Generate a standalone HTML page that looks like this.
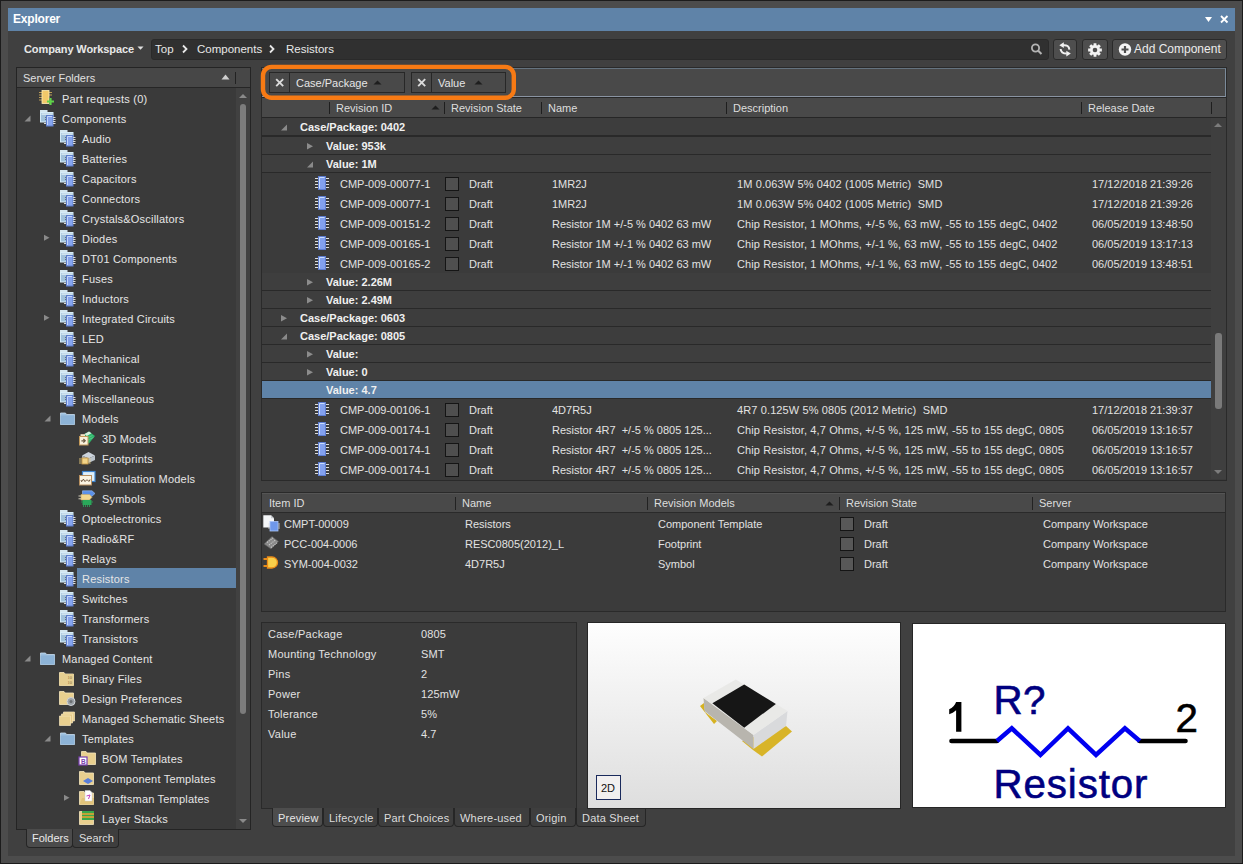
<!DOCTYPE html><html><head><meta charset="utf-8"><style>
*{box-sizing:border-box}
html,body{margin:0;padding:0}
body{width:1243px;height:864px;overflow:hidden;background:#1c1c1c;font-family:"Liberation Sans", sans-serif;font-size:11px;color:#e2e2e2;position:relative}
.a{position:absolute}
.t{position:absolute;white-space:nowrap;line-height:20px;height:20px}
.b{font-weight:bold}
svg{position:absolute;overflow:visible}
</style></head><body>
<div class="a" style="left:1px;top:1px;width:1241px;height:862px;background:#4c4c4c"></div>
<div class="a" style="left:8px;top:8px;width:1227px;height:848px;background:#404040"></div>
<div class="a" style="left:8px;top:8px;width:1227px;height:23px;background:#5f83a8"></div>
<div class="t" style="left:13px;top:9px;height:20px;line-height:20px;font-weight:bold;font-size:12px;color:#fff;letter-spacing:-0.2px">Explorer</div>
<svg style="left:1204px;top:15px" width="10" height="8" viewBox="0 0 10 8"><path d="M1 2 L8 2 L4.5 7 Z" fill="#fff"/></svg>
<svg style="left:1220px;top:15px" width="9" height="9" viewBox="0 0 9 9"><path d="M1 1 L7.5 7.5 M7.5 1 L1 7.5" stroke="#fff" stroke-width="1.8"/></svg>
<div class="t" style="left:24px;top:39px;height:20px;line-height:20px;font-weight:bold;color:#e8e8e8;letter-spacing:-0.1px">Company Workspace</div>
<svg style="left:137px;top:46px" width="8" height="5" viewBox="0 0 8 5"><path d="M0.5 0.5 L6.5 0.5 L3.5 3.8 Z" fill="#e0e0e0"/></svg>
<div class="a" style="left:151px;top:39px;width:898px;height:21px;background:#303030;border-radius:3px;border:1px solid #2a2a2a"></div>
<div class="t" style="left:155px;top:39px;height:20px;line-height:20px;color:#e8e8e8;font-size:11.5px">Top</div>
<svg style="left:181px;top:44px" width="8" height="10" viewBox="0 0 8 10"><path d="M2 1.5 L5.5 5 L2 8.5" stroke="#e8e8e8" stroke-width="1.8" fill="none"/></svg>
<div class="t" style="left:197px;top:39px;height:20px;line-height:20px;color:#e8e8e8;font-size:11.5px">Components</div>
<svg style="left:268px;top:44px" width="8" height="10" viewBox="0 0 8 10"><path d="M2 1.5 L5.5 5 L2 8.5" stroke="#e8e8e8" stroke-width="1.8" fill="none"/></svg>
<div class="t" style="left:286px;top:39px;height:20px;line-height:20px;color:#e8e8e8;font-size:11.5px">Resistors</div>
<svg style="left:1030px;top:42px" width="14" height="14" viewBox="0 0 14 14"><circle cx="5.5" cy="6" r="3.6" stroke="#b4b4b4" stroke-width="1.8" fill="none"/><path d="M8.2 8.7 L11.5 12" stroke="#b4b4b4" stroke-width="2"/></svg>
<div class="a" style="left:1053px;top:39px;width:24px;height:21px;background:#4e4e4e;border:1px solid #2a2a2a;border-radius:3px"></div>
<svg style="left:1057px;top:41px" width="16" height="16" viewBox="0 0 16 16"><path d="M2.3 4.2 L6.8 1.3 L6.8 7 Z" fill="#f0f0f0"/><path d="M6 4.2 Q12 3.6 12.4 8.6" stroke="#f0f0f0" stroke-width="2" fill="none"/><path d="M3.6 8 Q4 12.6 9.8 12.6" stroke="#f0f0f0" stroke-width="2" fill="none"/><path d="M13.8 12.6 L9.3 9.7 L9.3 15.4 Z" fill="#f0f0f0"/></svg>
<div class="a" style="left:1082px;top:39px;width:26px;height:21px;background:#4e4e4e;border:1px solid #2a2a2a;border-radius:3px"></div>
<svg style="left:1087px;top:42px" width="16" height="16" viewBox="0 0 16 16"><path d="M12.78 6.52 L14.86 6.61 L14.86 9.39 L12.78 9.48 L12.42 10.33 L13.83 11.87 L11.87 13.83 L10.33 12.42 L9.48 12.78 L9.39 14.86 L6.61 14.86 L6.52 12.78 L5.67 12.42 L4.13 13.83 L2.17 11.87 L3.58 10.33 L3.22 9.48 L1.14 9.39 L1.14 6.61 L3.22 6.52 L3.58 5.67 L2.17 4.13 L4.13 2.17 L5.67 3.58 L6.52 3.22 L6.61 1.14 L9.39 1.14 L9.48 3.22 L10.33 3.58 L11.87 2.17 L13.83 4.13 L12.42 5.67 Z" fill="#f2f2f2"/><circle cx="8" cy="8" r="2.3" fill="#4e4e4e"/></svg>
<div class="a" style="left:1112px;top:39px;width:115px;height:21px;background:#4e4e4e;border:1px solid #2a2a2a;border-radius:3px"></div>
<svg style="left:1118px;top:43px" width="14" height="14" viewBox="0 0 14 14"><circle cx="7" cy="6.5" r="6.2" fill="#f4f4f4"/><path d="M7 3 V10 M3.5 6.5 H10.5" stroke="#4e4e4e" stroke-width="2.2"/></svg>
<div class="t" style="left:1134px;top:39px;height:20px;line-height:20px;color:#ececec;font-size:12px">Add Component</div>
<div class="a" style="left:16px;top:67px;width:235px;height:763px;background:#3a3a3a;border:1px solid #242424"></div>
<div class="a" style="left:17px;top:68px;width:233px;height:20px;background:#474747;border-bottom:1px solid #262626"></div>
<div class="t" style="left:23px;top:68px;height:20px;line-height:20px;color:#e0e0e0">Server Folders</div>
<svg style="left:221px;top:74px" width="10" height="6" viewBox="0 0 10 6"><path d="M0.5 5.5 L4.5 0.5 L8.5 5.5 Z" fill="#cfcfcf"/></svg>
<div class="a" style="left:235px;top:72px;width:1px;height:12px;background:#222"></div>
<div class="a" style="left:236px;top:88px;width:14px;height:741px;background:#414141"></div>
<svg style="left:238px;top:93px" width="10" height="6" viewBox="0 0 10 6"><path d="M1 5 L5 1 L9 5 Z" fill="#8a8a8a"/></svg>
<div class="a" style="left:240px;top:104px;width:6px;height:610px;background:#7c7c7c;border-radius:3px"></div>
<svg style="left:238px;top:818px" width="10" height="6" viewBox="0 0 10 6"><path d="M1 1 L5 5 L9 1 Z" fill="#8a8a8a"/></svg>
<svg style="left:39px;top:90px" width="16" height="16" viewBox="0 0 16 16"><path d="M0 2.5 H3 M0 5 H3 M0 7.5 H3 M0 10 H3 M10 2.5 H13 M10 5 H13" stroke="#c9a85a" stroke-width="0.9"/><rect x="3" y="0.5" width="7" height="13" fill="#f2c96a" stroke="#fff1b8" stroke-width="0.8"/><path d="M11.5 8 V15 M8 11.5 H15" stroke="#5fd34a" stroke-width="2.2"/></svg>
<div class="t" style="left:62px;top:89px;height:20px;line-height:20px;color:#e6e6e6;letter-spacing:0.2px">Part requests (0)</div>
<svg style="left:24px;top:115px" width="8" height="8" viewBox="0 0 8 8"><path d="M0.5 6.5 L6.5 6.5 L6.5 0.5 Z" fill="#8a8a8a"/></svg>
<svg style="left:40px;top:110px" width="18" height="18" viewBox="0 0 18 18"><rect x="0" y="0" width="7.5" height="2.5" fill="#d4e6ee"/><rect x="0.5" y="2.5" width="12.5" height="9.5" fill="#a2c2da" stroke="#d6ecf8" stroke-width="1"/><rect x="1.5" y="3.5" width="10.5" height="1.2" fill="#e6f2f8"/><path d="M5 7.5 H7 M5 9.5 H7" stroke="#5a6a78" stroke-width="0.9"/><rect x="6.5" y="5.5" width="6.5" height="10.5" fill="#87a5ee" stroke="#5f7fcc" stroke-width="1"/><path d="M7.5 6.5 V15 M7.5 6.5 H12" stroke="#c4d6fc" stroke-width="1"/><path d="M13 7.5 H15.5 M13 9.5 H15.5 M13 11.5 H15.5 M13 13.5 H15.5 M4 13.5 H6" stroke="#d8d8d8" stroke-width="1"/></svg>
<div class="t" style="left:62px;top:109px;height:20px;line-height:20px;color:#e6e6e6;letter-spacing:0.2px">Components</div>
<svg style="left:60px;top:130px" width="18" height="18" viewBox="0 0 18 18"><rect x="0" y="0" width="7.5" height="2.5" fill="#d4e6ee"/><rect x="0.5" y="2.5" width="12.5" height="9.5" fill="#a2c2da" stroke="#d6ecf8" stroke-width="1"/><rect x="1.5" y="3.5" width="10.5" height="1.2" fill="#e6f2f8"/><path d="M5 7.5 H7 M5 9.5 H7" stroke="#5a6a78" stroke-width="0.9"/><rect x="6.5" y="5.5" width="6.5" height="10.5" fill="#87a5ee" stroke="#5f7fcc" stroke-width="1"/><path d="M7.5 6.5 V15 M7.5 6.5 H12" stroke="#c4d6fc" stroke-width="1"/><path d="M13 7.5 H15.5 M13 9.5 H15.5 M13 11.5 H15.5 M13 13.5 H15.5 M4 13.5 H6" stroke="#d8d8d8" stroke-width="1"/></svg>
<div class="t" style="left:82px;top:129px;height:20px;line-height:20px;color:#e6e6e6;letter-spacing:0.2px">Audio</div>
<svg style="left:60px;top:150px" width="18" height="18" viewBox="0 0 18 18"><rect x="0" y="0" width="7.5" height="2.5" fill="#d4e6ee"/><rect x="0.5" y="2.5" width="12.5" height="9.5" fill="#a2c2da" stroke="#d6ecf8" stroke-width="1"/><rect x="1.5" y="3.5" width="10.5" height="1.2" fill="#e6f2f8"/><path d="M5 7.5 H7 M5 9.5 H7" stroke="#5a6a78" stroke-width="0.9"/><rect x="6.5" y="5.5" width="6.5" height="10.5" fill="#87a5ee" stroke="#5f7fcc" stroke-width="1"/><path d="M7.5 6.5 V15 M7.5 6.5 H12" stroke="#c4d6fc" stroke-width="1"/><path d="M13 7.5 H15.5 M13 9.5 H15.5 M13 11.5 H15.5 M13 13.5 H15.5 M4 13.5 H6" stroke="#d8d8d8" stroke-width="1"/></svg>
<div class="t" style="left:82px;top:149px;height:20px;line-height:20px;color:#e6e6e6;letter-spacing:0.2px">Batteries</div>
<svg style="left:60px;top:170px" width="18" height="18" viewBox="0 0 18 18"><rect x="0" y="0" width="7.5" height="2.5" fill="#d4e6ee"/><rect x="0.5" y="2.5" width="12.5" height="9.5" fill="#a2c2da" stroke="#d6ecf8" stroke-width="1"/><rect x="1.5" y="3.5" width="10.5" height="1.2" fill="#e6f2f8"/><path d="M5 7.5 H7 M5 9.5 H7" stroke="#5a6a78" stroke-width="0.9"/><rect x="6.5" y="5.5" width="6.5" height="10.5" fill="#87a5ee" stroke="#5f7fcc" stroke-width="1"/><path d="M7.5 6.5 V15 M7.5 6.5 H12" stroke="#c4d6fc" stroke-width="1"/><path d="M13 7.5 H15.5 M13 9.5 H15.5 M13 11.5 H15.5 M13 13.5 H15.5 M4 13.5 H6" stroke="#d8d8d8" stroke-width="1"/></svg>
<div class="t" style="left:82px;top:169px;height:20px;line-height:20px;color:#e6e6e6;letter-spacing:0.2px">Capacitors</div>
<svg style="left:60px;top:190px" width="18" height="18" viewBox="0 0 18 18"><rect x="0" y="0" width="7.5" height="2.5" fill="#d4e6ee"/><rect x="0.5" y="2.5" width="12.5" height="9.5" fill="#a2c2da" stroke="#d6ecf8" stroke-width="1"/><rect x="1.5" y="3.5" width="10.5" height="1.2" fill="#e6f2f8"/><path d="M5 7.5 H7 M5 9.5 H7" stroke="#5a6a78" stroke-width="0.9"/><rect x="6.5" y="5.5" width="6.5" height="10.5" fill="#87a5ee" stroke="#5f7fcc" stroke-width="1"/><path d="M7.5 6.5 V15 M7.5 6.5 H12" stroke="#c4d6fc" stroke-width="1"/><path d="M13 7.5 H15.5 M13 9.5 H15.5 M13 11.5 H15.5 M13 13.5 H15.5 M4 13.5 H6" stroke="#d8d8d8" stroke-width="1"/></svg>
<div class="t" style="left:82px;top:189px;height:20px;line-height:20px;color:#e6e6e6;letter-spacing:0.2px">Connectors</div>
<svg style="left:60px;top:210px" width="18" height="18" viewBox="0 0 18 18"><rect x="0" y="0" width="7.5" height="2.5" fill="#d4e6ee"/><rect x="0.5" y="2.5" width="12.5" height="9.5" fill="#a2c2da" stroke="#d6ecf8" stroke-width="1"/><rect x="1.5" y="3.5" width="10.5" height="1.2" fill="#e6f2f8"/><path d="M5 7.5 H7 M5 9.5 H7" stroke="#5a6a78" stroke-width="0.9"/><rect x="6.5" y="5.5" width="6.5" height="10.5" fill="#87a5ee" stroke="#5f7fcc" stroke-width="1"/><path d="M7.5 6.5 V15 M7.5 6.5 H12" stroke="#c4d6fc" stroke-width="1"/><path d="M13 7.5 H15.5 M13 9.5 H15.5 M13 11.5 H15.5 M13 13.5 H15.5 M4 13.5 H6" stroke="#d8d8d8" stroke-width="1"/></svg>
<div class="t" style="left:82px;top:209px;height:20px;line-height:20px;color:#e6e6e6;letter-spacing:0.2px">Crystals&amp;Oscillators</div>
<svg style="left:43px;top:234px" width="8" height="8" viewBox="0 0 8 8"><path d="M1 0.8 L6.5 3.8 L1 6.8 Z" fill="#8a8a8a"/></svg>
<svg style="left:60px;top:230px" width="18" height="18" viewBox="0 0 18 18"><rect x="0" y="0" width="7.5" height="2.5" fill="#d4e6ee"/><rect x="0.5" y="2.5" width="12.5" height="9.5" fill="#a2c2da" stroke="#d6ecf8" stroke-width="1"/><rect x="1.5" y="3.5" width="10.5" height="1.2" fill="#e6f2f8"/><path d="M5 7.5 H7 M5 9.5 H7" stroke="#5a6a78" stroke-width="0.9"/><rect x="6.5" y="5.5" width="6.5" height="10.5" fill="#87a5ee" stroke="#5f7fcc" stroke-width="1"/><path d="M7.5 6.5 V15 M7.5 6.5 H12" stroke="#c4d6fc" stroke-width="1"/><path d="M13 7.5 H15.5 M13 9.5 H15.5 M13 11.5 H15.5 M13 13.5 H15.5 M4 13.5 H6" stroke="#d8d8d8" stroke-width="1"/></svg>
<div class="t" style="left:82px;top:229px;height:20px;line-height:20px;color:#e6e6e6;letter-spacing:0.2px">Diodes</div>
<svg style="left:60px;top:250px" width="18" height="18" viewBox="0 0 18 18"><rect x="0" y="0" width="7.5" height="2.5" fill="#d4e6ee"/><rect x="0.5" y="2.5" width="12.5" height="9.5" fill="#a2c2da" stroke="#d6ecf8" stroke-width="1"/><rect x="1.5" y="3.5" width="10.5" height="1.2" fill="#e6f2f8"/><path d="M5 7.5 H7 M5 9.5 H7" stroke="#5a6a78" stroke-width="0.9"/><rect x="6.5" y="5.5" width="6.5" height="10.5" fill="#87a5ee" stroke="#5f7fcc" stroke-width="1"/><path d="M7.5 6.5 V15 M7.5 6.5 H12" stroke="#c4d6fc" stroke-width="1"/><path d="M13 7.5 H15.5 M13 9.5 H15.5 M13 11.5 H15.5 M13 13.5 H15.5 M4 13.5 H6" stroke="#d8d8d8" stroke-width="1"/></svg>
<div class="t" style="left:82px;top:249px;height:20px;line-height:20px;color:#e6e6e6;letter-spacing:0.2px">DT01 Components</div>
<svg style="left:60px;top:270px" width="18" height="18" viewBox="0 0 18 18"><rect x="0" y="0" width="7.5" height="2.5" fill="#d4e6ee"/><rect x="0.5" y="2.5" width="12.5" height="9.5" fill="#a2c2da" stroke="#d6ecf8" stroke-width="1"/><rect x="1.5" y="3.5" width="10.5" height="1.2" fill="#e6f2f8"/><path d="M5 7.5 H7 M5 9.5 H7" stroke="#5a6a78" stroke-width="0.9"/><rect x="6.5" y="5.5" width="6.5" height="10.5" fill="#87a5ee" stroke="#5f7fcc" stroke-width="1"/><path d="M7.5 6.5 V15 M7.5 6.5 H12" stroke="#c4d6fc" stroke-width="1"/><path d="M13 7.5 H15.5 M13 9.5 H15.5 M13 11.5 H15.5 M13 13.5 H15.5 M4 13.5 H6" stroke="#d8d8d8" stroke-width="1"/></svg>
<div class="t" style="left:82px;top:269px;height:20px;line-height:20px;color:#e6e6e6;letter-spacing:0.2px">Fuses</div>
<svg style="left:60px;top:290px" width="18" height="18" viewBox="0 0 18 18"><rect x="0" y="0" width="7.5" height="2.5" fill="#d4e6ee"/><rect x="0.5" y="2.5" width="12.5" height="9.5" fill="#a2c2da" stroke="#d6ecf8" stroke-width="1"/><rect x="1.5" y="3.5" width="10.5" height="1.2" fill="#e6f2f8"/><path d="M5 7.5 H7 M5 9.5 H7" stroke="#5a6a78" stroke-width="0.9"/><rect x="6.5" y="5.5" width="6.5" height="10.5" fill="#87a5ee" stroke="#5f7fcc" stroke-width="1"/><path d="M7.5 6.5 V15 M7.5 6.5 H12" stroke="#c4d6fc" stroke-width="1"/><path d="M13 7.5 H15.5 M13 9.5 H15.5 M13 11.5 H15.5 M13 13.5 H15.5 M4 13.5 H6" stroke="#d8d8d8" stroke-width="1"/></svg>
<div class="t" style="left:82px;top:289px;height:20px;line-height:20px;color:#e6e6e6;letter-spacing:0.2px">Inductors</div>
<svg style="left:43px;top:314px" width="8" height="8" viewBox="0 0 8 8"><path d="M1 0.8 L6.5 3.8 L1 6.8 Z" fill="#8a8a8a"/></svg>
<svg style="left:60px;top:310px" width="18" height="18" viewBox="0 0 18 18"><rect x="0" y="0" width="7.5" height="2.5" fill="#d4e6ee"/><rect x="0.5" y="2.5" width="12.5" height="9.5" fill="#a2c2da" stroke="#d6ecf8" stroke-width="1"/><rect x="1.5" y="3.5" width="10.5" height="1.2" fill="#e6f2f8"/><path d="M5 7.5 H7 M5 9.5 H7" stroke="#5a6a78" stroke-width="0.9"/><rect x="6.5" y="5.5" width="6.5" height="10.5" fill="#87a5ee" stroke="#5f7fcc" stroke-width="1"/><path d="M7.5 6.5 V15 M7.5 6.5 H12" stroke="#c4d6fc" stroke-width="1"/><path d="M13 7.5 H15.5 M13 9.5 H15.5 M13 11.5 H15.5 M13 13.5 H15.5 M4 13.5 H6" stroke="#d8d8d8" stroke-width="1"/></svg>
<div class="t" style="left:82px;top:309px;height:20px;line-height:20px;color:#e6e6e6;letter-spacing:0.2px">Integrated Circuits</div>
<svg style="left:60px;top:330px" width="18" height="18" viewBox="0 0 18 18"><rect x="0" y="0" width="7.5" height="2.5" fill="#d4e6ee"/><rect x="0.5" y="2.5" width="12.5" height="9.5" fill="#a2c2da" stroke="#d6ecf8" stroke-width="1"/><rect x="1.5" y="3.5" width="10.5" height="1.2" fill="#e6f2f8"/><path d="M5 7.5 H7 M5 9.5 H7" stroke="#5a6a78" stroke-width="0.9"/><rect x="6.5" y="5.5" width="6.5" height="10.5" fill="#87a5ee" stroke="#5f7fcc" stroke-width="1"/><path d="M7.5 6.5 V15 M7.5 6.5 H12" stroke="#c4d6fc" stroke-width="1"/><path d="M13 7.5 H15.5 M13 9.5 H15.5 M13 11.5 H15.5 M13 13.5 H15.5 M4 13.5 H6" stroke="#d8d8d8" stroke-width="1"/></svg>
<div class="t" style="left:82px;top:329px;height:20px;line-height:20px;color:#e6e6e6;letter-spacing:0.2px">LED</div>
<svg style="left:60px;top:350px" width="18" height="18" viewBox="0 0 18 18"><rect x="0" y="0" width="7.5" height="2.5" fill="#d4e6ee"/><rect x="0.5" y="2.5" width="12.5" height="9.5" fill="#a2c2da" stroke="#d6ecf8" stroke-width="1"/><rect x="1.5" y="3.5" width="10.5" height="1.2" fill="#e6f2f8"/><path d="M5 7.5 H7 M5 9.5 H7" stroke="#5a6a78" stroke-width="0.9"/><rect x="6.5" y="5.5" width="6.5" height="10.5" fill="#87a5ee" stroke="#5f7fcc" stroke-width="1"/><path d="M7.5 6.5 V15 M7.5 6.5 H12" stroke="#c4d6fc" stroke-width="1"/><path d="M13 7.5 H15.5 M13 9.5 H15.5 M13 11.5 H15.5 M13 13.5 H15.5 M4 13.5 H6" stroke="#d8d8d8" stroke-width="1"/></svg>
<div class="t" style="left:82px;top:349px;height:20px;line-height:20px;color:#e6e6e6;letter-spacing:0.2px">Mechanical</div>
<svg style="left:60px;top:370px" width="18" height="18" viewBox="0 0 18 18"><rect x="0" y="0" width="7.5" height="2.5" fill="#d4e6ee"/><rect x="0.5" y="2.5" width="12.5" height="9.5" fill="#a2c2da" stroke="#d6ecf8" stroke-width="1"/><rect x="1.5" y="3.5" width="10.5" height="1.2" fill="#e6f2f8"/><path d="M5 7.5 H7 M5 9.5 H7" stroke="#5a6a78" stroke-width="0.9"/><rect x="6.5" y="5.5" width="6.5" height="10.5" fill="#87a5ee" stroke="#5f7fcc" stroke-width="1"/><path d="M7.5 6.5 V15 M7.5 6.5 H12" stroke="#c4d6fc" stroke-width="1"/><path d="M13 7.5 H15.5 M13 9.5 H15.5 M13 11.5 H15.5 M13 13.5 H15.5 M4 13.5 H6" stroke="#d8d8d8" stroke-width="1"/></svg>
<div class="t" style="left:82px;top:369px;height:20px;line-height:20px;color:#e6e6e6;letter-spacing:0.2px">Mechanicals</div>
<svg style="left:60px;top:390px" width="18" height="18" viewBox="0 0 18 18"><rect x="0" y="0" width="7.5" height="2.5" fill="#d4e6ee"/><rect x="0.5" y="2.5" width="12.5" height="9.5" fill="#a2c2da" stroke="#d6ecf8" stroke-width="1"/><rect x="1.5" y="3.5" width="10.5" height="1.2" fill="#e6f2f8"/><path d="M5 7.5 H7 M5 9.5 H7" stroke="#5a6a78" stroke-width="0.9"/><rect x="6.5" y="5.5" width="6.5" height="10.5" fill="#87a5ee" stroke="#5f7fcc" stroke-width="1"/><path d="M7.5 6.5 V15 M7.5 6.5 H12" stroke="#c4d6fc" stroke-width="1"/><path d="M13 7.5 H15.5 M13 9.5 H15.5 M13 11.5 H15.5 M13 13.5 H15.5 M4 13.5 H6" stroke="#d8d8d8" stroke-width="1"/></svg>
<div class="t" style="left:82px;top:389px;height:20px;line-height:20px;color:#e6e6e6;letter-spacing:0.2px">Miscellaneous</div>
<svg style="left:44px;top:415px" width="8" height="8" viewBox="0 0 8 8"><path d="M0.5 6.5 L6.5 6.5 L6.5 0.5 Z" fill="#8a8a8a"/></svg>
<svg style="left:60px;top:412px" width="16" height="14" viewBox="0 0 16 14"><path d="M0.5 1 H5.5 L6.5 2.5 H14.5 V12.5 H0.5 Z" fill="#9cbfde" stroke="#c9def0" stroke-width="0.8"/><rect x="0.5" y="3.5" width="14" height="9" fill="#8db3d6"/></svg>
<div class="t" style="left:82px;top:409px;height:20px;line-height:20px;color:#e6e6e6;letter-spacing:0.2px">Models</div>
<svg style="left:78px;top:429px" width="20" height="18" viewBox="0 0 20 18"><path d="M6.5 5 L11 2.5 L17 7 L10.5 15 Z" fill="#2fb36a"/><path d="M6.5 5 L11 2.5 L13.5 4.3 L8.8 7 Z" fill="#d6f0de"/><path d="M9 9 L14.5 6.5 M9.8 11 L15.5 8.5" stroke="#6fd89a" stroke-width="0.6"/><rect x="2.5" y="5.2" width="4.5" height="2.2" fill="#f4e4c4"/><rect x="1.5" y="7.5" width="8.5" height="8.5" fill="#f8f0dc" stroke="#c49a5a" stroke-width="1"/><path d="M3.4 11.8 H7 M5.4 10 L7.2 11.8 L5.4 13.6" stroke="#6a5a42" stroke-width="1.2" fill="none"/></svg>
<div class="t" style="left:102px;top:429px;height:20px;line-height:20px;color:#e6e6e6;letter-spacing:0.2px">3D Models</div>
<svg style="left:78px;top:449px" width="20" height="18" viewBox="0 0 20 18"><path d="M4 6.5 L10.5 3 L17 6.5 L10.5 9.5 Z" fill="#cdd4dc"/><path d="M4 6.5 L10.5 9.5 L10.5 14 L4 11 Z" fill="#aab2bc"/><path d="M10.5 9.5 L17 6.5 L17 11 L10.5 14 Z" fill="#bcc4cc"/><rect x="4" y="9" width="6" height="6" fill="#f2d488" stroke="#c89a48" stroke-width="0.9"/><path d="M1 10 H3.6 M1 12 H3.6 M1 14 H3.6 M10.4 10 H12.6 M10.4 12 H12.6 M10.4 14 H12.6" stroke="#e6c878" stroke-width="0.9"/></svg>
<div class="t" style="left:102px;top:449px;height:20px;line-height:20px;color:#e6e6e6;letter-spacing:0.2px">Footprints</div>
<svg style="left:78px;top:469px" width="20" height="18" viewBox="0 0 20 18"><rect x="4.5" y="2.5" width="12.5" height="10" fill="#dff0fa" stroke="#3f86d0" stroke-width="1.2"/><rect x="1.5" y="6.5" width="12" height="9.5" fill="#fbf4e2" stroke="#b89060" stroke-width="1"/><path d="M3 11 Q3.5 14 4.5 11.5 T6 11 T7.5 12 T9 11 T10.5 12 T12 10.5" stroke="#5a4028" stroke-width="0.9" fill="none"/></svg>
<div class="t" style="left:102px;top:469px;height:20px;line-height:20px;color:#e6e6e6;letter-spacing:0.2px">Simulation Models</div>
<svg style="left:78px;top:489px" width="20" height="20" viewBox="0 0 20 20"><path d="M4.5 1.8 H14 L17 4.5 L14 7.2 H4.5 Z" fill="#5b90e8" stroke="#9cc0f6" stroke-width="0.6"/><path d="M3 5.5 H11.5 L14 8.3 L11.5 11 H3 Z" fill="#f2d890" stroke="#c8a868" stroke-width="0.6"/><path d="M0.5 7 H3 M0.5 9.8 H3" stroke="#e8e0c8" stroke-width="0.9"/><rect x="4.5" y="11" width="9" height="5" fill="#2aa85a"/><path d="M5.5 16 V18 M7.5 16 V18 M9.5 16 V18 M11.5 16 V18 M3 13 H4.5 M13.5 13 H15" stroke="#2aa85a" stroke-width="0.8"/></svg>
<div class="t" style="left:102px;top:489px;height:20px;line-height:20px;color:#e6e6e6;letter-spacing:0.2px">Symbols</div>
<svg style="left:60px;top:510px" width="18" height="18" viewBox="0 0 18 18"><rect x="0" y="0" width="7.5" height="2.5" fill="#d4e6ee"/><rect x="0.5" y="2.5" width="12.5" height="9.5" fill="#a2c2da" stroke="#d6ecf8" stroke-width="1"/><rect x="1.5" y="3.5" width="10.5" height="1.2" fill="#e6f2f8"/><path d="M5 7.5 H7 M5 9.5 H7" stroke="#5a6a78" stroke-width="0.9"/><rect x="6.5" y="5.5" width="6.5" height="10.5" fill="#87a5ee" stroke="#5f7fcc" stroke-width="1"/><path d="M7.5 6.5 V15 M7.5 6.5 H12" stroke="#c4d6fc" stroke-width="1"/><path d="M13 7.5 H15.5 M13 9.5 H15.5 M13 11.5 H15.5 M13 13.5 H15.5 M4 13.5 H6" stroke="#d8d8d8" stroke-width="1"/></svg>
<div class="t" style="left:82px;top:509px;height:20px;line-height:20px;color:#e6e6e6;letter-spacing:0.2px">Optoelectronics</div>
<svg style="left:60px;top:530px" width="18" height="18" viewBox="0 0 18 18"><rect x="0" y="0" width="7.5" height="2.5" fill="#d4e6ee"/><rect x="0.5" y="2.5" width="12.5" height="9.5" fill="#a2c2da" stroke="#d6ecf8" stroke-width="1"/><rect x="1.5" y="3.5" width="10.5" height="1.2" fill="#e6f2f8"/><path d="M5 7.5 H7 M5 9.5 H7" stroke="#5a6a78" stroke-width="0.9"/><rect x="6.5" y="5.5" width="6.5" height="10.5" fill="#87a5ee" stroke="#5f7fcc" stroke-width="1"/><path d="M7.5 6.5 V15 M7.5 6.5 H12" stroke="#c4d6fc" stroke-width="1"/><path d="M13 7.5 H15.5 M13 9.5 H15.5 M13 11.5 H15.5 M13 13.5 H15.5 M4 13.5 H6" stroke="#d8d8d8" stroke-width="1"/></svg>
<div class="t" style="left:82px;top:529px;height:20px;line-height:20px;color:#e6e6e6;letter-spacing:0.2px">Radio&amp;RF</div>
<svg style="left:60px;top:550px" width="18" height="18" viewBox="0 0 18 18"><rect x="0" y="0" width="7.5" height="2.5" fill="#d4e6ee"/><rect x="0.5" y="2.5" width="12.5" height="9.5" fill="#a2c2da" stroke="#d6ecf8" stroke-width="1"/><rect x="1.5" y="3.5" width="10.5" height="1.2" fill="#e6f2f8"/><path d="M5 7.5 H7 M5 9.5 H7" stroke="#5a6a78" stroke-width="0.9"/><rect x="6.5" y="5.5" width="6.5" height="10.5" fill="#87a5ee" stroke="#5f7fcc" stroke-width="1"/><path d="M7.5 6.5 V15 M7.5 6.5 H12" stroke="#c4d6fc" stroke-width="1"/><path d="M13 7.5 H15.5 M13 9.5 H15.5 M13 11.5 H15.5 M13 13.5 H15.5 M4 13.5 H6" stroke="#d8d8d8" stroke-width="1"/></svg>
<div class="t" style="left:82px;top:549px;height:20px;line-height:20px;color:#e6e6e6;letter-spacing:0.2px">Relays</div>
<div class="a" style="left:77px;top:568px;width:159px;height:20px;background:#5f83a8"></div>
<svg style="left:60px;top:570px" width="18" height="18" viewBox="0 0 18 18"><rect x="0" y="0" width="7.5" height="2.5" fill="#d4e6ee"/><rect x="0.5" y="2.5" width="12.5" height="9.5" fill="#a2c2da" stroke="#d6ecf8" stroke-width="1"/><rect x="1.5" y="3.5" width="10.5" height="1.2" fill="#e6f2f8"/><path d="M5 7.5 H7 M5 9.5 H7" stroke="#5a6a78" stroke-width="0.9"/><rect x="6.5" y="5.5" width="6.5" height="10.5" fill="#87a5ee" stroke="#5f7fcc" stroke-width="1"/><path d="M7.5 6.5 V15 M7.5 6.5 H12" stroke="#c4d6fc" stroke-width="1"/><path d="M13 7.5 H15.5 M13 9.5 H15.5 M13 11.5 H15.5 M13 13.5 H15.5 M4 13.5 H6" stroke="#d8d8d8" stroke-width="1"/></svg>
<div class="t" style="left:82px;top:569px;height:20px;line-height:20px;color:#e6e6e6;letter-spacing:0.2px">Resistors</div>
<svg style="left:60px;top:590px" width="18" height="18" viewBox="0 0 18 18"><rect x="0" y="0" width="7.5" height="2.5" fill="#d4e6ee"/><rect x="0.5" y="2.5" width="12.5" height="9.5" fill="#a2c2da" stroke="#d6ecf8" stroke-width="1"/><rect x="1.5" y="3.5" width="10.5" height="1.2" fill="#e6f2f8"/><path d="M5 7.5 H7 M5 9.5 H7" stroke="#5a6a78" stroke-width="0.9"/><rect x="6.5" y="5.5" width="6.5" height="10.5" fill="#87a5ee" stroke="#5f7fcc" stroke-width="1"/><path d="M7.5 6.5 V15 M7.5 6.5 H12" stroke="#c4d6fc" stroke-width="1"/><path d="M13 7.5 H15.5 M13 9.5 H15.5 M13 11.5 H15.5 M13 13.5 H15.5 M4 13.5 H6" stroke="#d8d8d8" stroke-width="1"/></svg>
<div class="t" style="left:82px;top:589px;height:20px;line-height:20px;color:#e6e6e6;letter-spacing:0.2px">Switches</div>
<svg style="left:60px;top:610px" width="18" height="18" viewBox="0 0 18 18"><rect x="0" y="0" width="7.5" height="2.5" fill="#d4e6ee"/><rect x="0.5" y="2.5" width="12.5" height="9.5" fill="#a2c2da" stroke="#d6ecf8" stroke-width="1"/><rect x="1.5" y="3.5" width="10.5" height="1.2" fill="#e6f2f8"/><path d="M5 7.5 H7 M5 9.5 H7" stroke="#5a6a78" stroke-width="0.9"/><rect x="6.5" y="5.5" width="6.5" height="10.5" fill="#87a5ee" stroke="#5f7fcc" stroke-width="1"/><path d="M7.5 6.5 V15 M7.5 6.5 H12" stroke="#c4d6fc" stroke-width="1"/><path d="M13 7.5 H15.5 M13 9.5 H15.5 M13 11.5 H15.5 M13 13.5 H15.5 M4 13.5 H6" stroke="#d8d8d8" stroke-width="1"/></svg>
<div class="t" style="left:82px;top:609px;height:20px;line-height:20px;color:#e6e6e6;letter-spacing:0.2px">Transformers</div>
<svg style="left:60px;top:630px" width="18" height="18" viewBox="0 0 18 18"><rect x="0" y="0" width="7.5" height="2.5" fill="#d4e6ee"/><rect x="0.5" y="2.5" width="12.5" height="9.5" fill="#a2c2da" stroke="#d6ecf8" stroke-width="1"/><rect x="1.5" y="3.5" width="10.5" height="1.2" fill="#e6f2f8"/><path d="M5 7.5 H7 M5 9.5 H7" stroke="#5a6a78" stroke-width="0.9"/><rect x="6.5" y="5.5" width="6.5" height="10.5" fill="#87a5ee" stroke="#5f7fcc" stroke-width="1"/><path d="M7.5 6.5 V15 M7.5 6.5 H12" stroke="#c4d6fc" stroke-width="1"/><path d="M13 7.5 H15.5 M13 9.5 H15.5 M13 11.5 H15.5 M13 13.5 H15.5 M4 13.5 H6" stroke="#d8d8d8" stroke-width="1"/></svg>
<div class="t" style="left:82px;top:629px;height:20px;line-height:20px;color:#e6e6e6;letter-spacing:0.2px">Transistors</div>
<svg style="left:24px;top:655px" width="8" height="8" viewBox="0 0 8 8"><path d="M0.5 6.5 L6.5 6.5 L6.5 0.5 Z" fill="#8a8a8a"/></svg>
<svg style="left:40px;top:652px" width="16" height="14" viewBox="0 0 16 14"><path d="M0.5 1 H5.5 L6.5 2.5 H14.5 V12.5 H0.5 Z" fill="#9cbfde" stroke="#c9def0" stroke-width="0.8"/><rect x="0.5" y="3.5" width="14" height="9" fill="#8db3d6"/></svg>
<div class="t" style="left:62px;top:649px;height:20px;line-height:20px;color:#e6e6e6;letter-spacing:0.2px">Managed Content</div>
<svg style="left:59px;top:671px" width="18" height="16" viewBox="0 0 18 16"><path d="M0.5 1.5 H5 L6 3 H14.5 V14.5 H0.5 Z" fill="#e9d08f" stroke="#f6e7bd" stroke-width="0.8"/><rect x="0.5" y="3" width="14" height="11.5" fill="#e6cf91"/><text x="8.5" y="8" font-size="4.5" fill="#8a7040" font-family="Liberation Serif">10</text><text x="8.5" y="13" font-size="4.5" fill="#8a7040" font-family="Liberation Serif">10</text></svg>
<div class="t" style="left:82px;top:669px;height:20px;line-height:20px;color:#e6e6e6;letter-spacing:0.2px">Binary Files</div>
<svg style="left:59px;top:690px" width="18" height="16" viewBox="0 0 18 16"><path d="M0.5 1.5 H5 L6 3 H14.5 V14.5 H0.5 Z" fill="#e9d08f" stroke="#f6e7bd" stroke-width="0.8"/><circle cx="12" cy="11.5" r="4" fill="#9aa0a6" stroke="#d0d4d8" stroke-width="1"/><circle cx="12" cy="11.5" r="1.5" fill="#6a6e72"/></svg>
<div class="t" style="left:82px;top:689px;height:20px;line-height:20px;color:#e6e6e6;letter-spacing:0.2px">Design Preferences</div>
<svg style="left:59px;top:711px" width="18" height="16" viewBox="0 0 18 16"><path d="M4.5 1 H15.5 V10 H4.5Z" fill="#e9d08f" stroke="#f6e7bd" stroke-width="0.7"/><path d="M2.5 3 H13.5 V12 H2.5Z" fill="#e6cb86" stroke="#f6e7bd" stroke-width="0.7"/><path d="M0.5 5 H11.5 V14.5 H0.5Z" fill="#e9d08f" stroke="#f6e7bd" stroke-width="0.7"/></svg>
<div class="t" style="left:82px;top:709px;height:20px;line-height:20px;color:#e6e6e6;letter-spacing:0.2px">Managed Schematic Sheets</div>
<svg style="left:44px;top:735px" width="8" height="8" viewBox="0 0 8 8"><path d="M0.5 6.5 L6.5 6.5 L6.5 0.5 Z" fill="#8a8a8a"/></svg>
<svg style="left:60px;top:732px" width="16" height="14" viewBox="0 0 16 14"><path d="M0.5 1 H5.5 L6.5 2.5 H14.5 V12.5 H0.5 Z" fill="#9cbfde" stroke="#c9def0" stroke-width="0.8"/><rect x="0.5" y="3.5" width="14" height="9" fill="#8db3d6"/></svg>
<div class="t" style="left:82px;top:729px;height:20px;line-height:20px;color:#e6e6e6;letter-spacing:0.2px">Templates</div>
<svg style="left:81px;top:750px" width="18" height="16" viewBox="0 0 18 16"><path d="M0.5 1.5 H5 L6 3 H14.5 V14.5 H0.5 Z" fill="#e9d08f" stroke="#f6e7bd" stroke-width="0.8"/><rect x="-2" y="7" width="8" height="8" fill="#fff" stroke="#7a3fb0" stroke-width="1.2"/><text x="0" y="13.5" font-size="6.5" font-weight="bold" fill="#7a3fb0" font-family="Liberation Sans">B</text></svg>
<div class="t" style="left:102px;top:749px;height:20px;line-height:20px;color:#e6e6e6;letter-spacing:0.2px">BOM Templates</div>
<svg style="left:79px;top:770px" width="18" height="16" viewBox="0 0 18 16"><path d="M0.5 1.5 H5 L6 3 H14.5 V14.5 H0.5 Z" fill="#e9d08f" stroke="#f6e7bd" stroke-width="0.8"/><path d="M4 11 L9 8 L14 11 L9 14 Z" fill="#5a7ed8"/></svg>
<div class="t" style="left:102px;top:769px;height:20px;line-height:20px;color:#e6e6e6;letter-spacing:0.2px">Component Templates</div>
<svg style="left:63px;top:794px" width="8" height="8" viewBox="0 0 8 8"><path d="M1 0.8 L6.5 3.8 L1 6.8 Z" fill="#8a8a8a"/></svg>
<svg style="left:79px;top:790px" width="18" height="16" viewBox="0 0 18 16"><path d="M0.5 1.5 H5 L6 3 H14.5 V14.5 H0.5 Z" fill="#e9d08f" stroke="#f6e7bd" stroke-width="0.8"/><path d="M0.5 14.5 L3 8 H15 L14.5 14.5 Z" fill="#e0c27a"/><path d="M6 0.5 H11 L13 2.5 V11 H6 Z" fill="#fff" stroke="#ccc" stroke-width="0.5"/><path d="M7.5 6 L11 5 L9.5 9" stroke="#c040c0" stroke-width="1" fill="none"/></svg>
<div class="t" style="left:102px;top:789px;height:20px;line-height:20px;color:#e6e6e6;letter-spacing:0.2px">Draftsman Templates</div>
<svg style="left:79px;top:810px" width="18" height="16" viewBox="0 0 18 16"><path d="M0.5 1.5 H5 L6 3 H14.5 V14.5 H0.5 Z" fill="#e9d08f" stroke="#f6e7bd" stroke-width="0.8"/><rect x="3" y="1" width="12" height="9" fill="#3aa84a"/><path d="M3 4 H15 M3 7 H15" stroke="#f0a030" stroke-width="1.4"/></svg>
<div class="t" style="left:102px;top:809px;height:20px;line-height:20px;color:#e6e6e6;letter-spacing:0.2px">Layer Stacks</div>
<div class="a" style="left:26px;top:829px;width:47px;height:19px;background:#4b4b4b;border:1px solid #252525;border-top:none;border-radius:0 0 4px 4px"></div>
<div class="t" style="left:32px;top:829px;height:19px;line-height:19px;color:#eaeaea;font-size:11px">Folders</div>
<div class="a" style="left:72px;top:829px;width:47px;height:19px;background:#3e3e3e;border:1px solid #252525;border-top:none;border-radius:0 0 4px 4px"></div>
<div class="t" style="left:79px;top:829px;height:19px;line-height:19px;color:#dedede;font-size:11px">Search</div>
<div class="a" style="left:261px;top:67px;width:966px;height:414px;background:#3b3b3b;border:1px solid #2a2a2a"></div>
<div class="a" style="left:262px;top:68px;width:964px;height:29px;background:#494949;border:1px solid #7b8b9b;border-top-color:#65737f;border-bottom-color:#8a94a2;border-left:none"></div>
<div class="a" style="left:269px;top:72px;width:21px;height:21px;background:#494949;border:1px solid #272727"></div>
<svg style="left:275px;top:78px" width="10" height="10" viewBox="0 0 10 10"><path d="M1.2 1.2 L8.2 8.2 M8.2 1.2 L1.2 8.2" stroke="#dcdcdc" stroke-width="1.9"/></svg>
<div class="a" style="left:289px;top:72px;width:116px;height:21px;background:#494949;border:1px solid #272727"></div>
<div class="t" style="left:296px;top:73px;height:21px;line-height:21px;color:#e6e6e6">Case/Package</div>
<svg style="left:373px;top:80px" width="9" height="5" viewBox="0 0 9 5"><path d="M0.5 4.5 L4.5 0.5 L8.5 4.5 Z" fill="#1e1e1e"/></svg>
<div class="a" style="left:411px;top:72px;width:21px;height:21px;background:#494949;border:1px solid #272727"></div>
<svg style="left:417px;top:78px" width="10" height="10" viewBox="0 0 10 10"><path d="M1.2 1.2 L8.2 8.2 M8.2 1.2 L1.2 8.2" stroke="#dcdcdc" stroke-width="1.9"/></svg>
<div class="a" style="left:431px;top:72px;width:75px;height:21px;background:#494949;border:1px solid #272727"></div>
<div class="t" style="left:438px;top:73px;height:21px;line-height:21px;color:#e6e6e6">Value</div>
<svg style="left:474px;top:80px" width="9" height="5" viewBox="0 0 9 5"><path d="M0.5 4.5 L4.5 0.5 L8.5 4.5 Z" fill="#1e1e1e"/></svg>
<div class="a" style="left:262px;top:97px;width:964px;height:21px;background:#494949;border-top:1px solid #262626;border-bottom:1px solid #262626"></div>
<div class="a" style="left:329px;top:102px;width:1px;height:12px;background:#1e1e1e"></div>
<div class="a" style="left:444px;top:102px;width:1px;height:12px;background:#1e1e1e"></div>
<div class="a" style="left:541px;top:102px;width:1px;height:12px;background:#1e1e1e"></div>
<div class="a" style="left:726px;top:102px;width:1px;height:12px;background:#1e1e1e"></div>
<div class="a" style="left:1081px;top:102px;width:1px;height:12px;background:#1e1e1e"></div>
<div class="a" style="left:1211px;top:102px;width:1px;height:12px;background:#1e1e1e"></div>
<div class="t" style="left:336px;top:98px;height:20px;line-height:20px;color:#dedede">Revision ID</div>
<svg style="left:431px;top:105px" width="9" height="5" viewBox="0 0 9 5"><path d="M0.5 4.5 L4.5 0.5 L8.5 4.5 Z" fill="#1e1e1e"/></svg>
<div class="t" style="left:451px;top:98px;height:20px;line-height:20px;color:#dedede">Revision State</div>
<div class="t" style="left:548px;top:98px;height:20px;line-height:20px;color:#dedede">Name</div>
<div class="t" style="left:733px;top:98px;height:20px;line-height:20px;color:#dedede">Description</div>
<div class="t" style="left:1088px;top:98px;height:20px;line-height:20px;color:#dedede">Release Date</div>
<div class="a" style="left:262px;top:118px;width:949px;height:19px;background:#3d3d3d;border-bottom:2px solid #292929"></div>
<svg style="left:281px;top:124px" width="8" height="8" viewBox="0 0 8 8"><path d="M0 6.5 L6 6.5 L6 0.5 Z" fill="#8a8a8a"/></svg>
<div class="t" style="left:300px;top:119px;height:17px;line-height:17px;font-weight:bold;color:#f0f0f0">Case/Package: 0402</div>
<div class="a" style="left:262px;top:137px;width:949px;height:18px;background:#3e3e3e;border-bottom:1px solid #292929"></div>
<svg style="left:307px;top:143px" width="8" height="8" viewBox="0 0 8 8"><path d="M0 0 L6 3.2 L0 6.4 Z" fill="#8c8c8c"/></svg>
<div class="t" style="left:326px;top:138px;height:17px;line-height:17px;font-weight:bold;color:#f0f0f0">Value: 953k</div>
<div class="a" style="left:262px;top:155px;width:949px;height:18px;background:#3e3e3e;border-bottom:1px solid #292929"></div>
<svg style="left:307px;top:161px" width="8" height="8" viewBox="0 0 8 8"><path d="M0 6.5 L6 6.5 L6 0.5 Z" fill="#8a8a8a"/></svg>
<div class="t" style="left:326px;top:156px;height:17px;line-height:17px;font-weight:bold;color:#f0f0f0">Value: 1M</div>
<div class="a" style="left:262px;top:173px;width:949px;height:20px;background:#3b3b3b"></div>
<svg style="left:315px;top:176px" width="15" height="15" viewBox="0 0 15 15"><path d="M0 2.5 H3 M0 5.5 H3 M0 8.5 H3 M0 11.5 H3 M11 2.5 H14 M11 5.5 H14 M11 8.5 H14 M11 11.5 H14" stroke="#dcdcdc" stroke-width="1"/><rect x="3.5" y="0.5" width="7" height="13" fill="#82a0ee" stroke="#5c7cd0" stroke-width="1"/><path d="M4.5 1.5 V12.5 M4.5 1.5 H9.5" stroke="#c8dcff" stroke-width="1"/></svg>
<div class="t" style="left:340px;top:174px;height:20px;line-height:20px;color:#e2e2e2">CMP-009-00077-1</div>
<div class="a" style="left:445px;top:177px;width:14px;height:14px;background:#4f4f4f;border:1.5px solid #151515"></div>
<div class="t" style="left:469px;top:174px;height:20px;line-height:20px;color:#e2e2e2">Draft</div>
<div class="t" style="left:552px;top:174px;height:20px;line-height:20px;color:#e2e2e2">1MR2J</div>
<div class="t" style="left:737px;top:174px;height:20px;line-height:20px;color:#e2e2e2;letter-spacing:0.12px">1M 0.063W 5% 0402 (1005 Metric)&nbsp; SMD</div>
<div class="t" style="left:1092px;top:174px;height:20px;line-height:20px;color:#e2e2e2">17/12/2018 21:39:26</div>
<div class="a" style="left:262px;top:193px;width:949px;height:20px;background:#3b3b3b"></div>
<svg style="left:315px;top:196px" width="15" height="15" viewBox="0 0 15 15"><path d="M0 2.5 H3 M0 5.5 H3 M0 8.5 H3 M0 11.5 H3 M11 2.5 H14 M11 5.5 H14 M11 8.5 H14 M11 11.5 H14" stroke="#dcdcdc" stroke-width="1"/><rect x="3.5" y="0.5" width="7" height="13" fill="#82a0ee" stroke="#5c7cd0" stroke-width="1"/><path d="M4.5 1.5 V12.5 M4.5 1.5 H9.5" stroke="#c8dcff" stroke-width="1"/></svg>
<div class="t" style="left:340px;top:194px;height:20px;line-height:20px;color:#e2e2e2">CMP-009-00077-1</div>
<div class="a" style="left:445px;top:197px;width:14px;height:14px;background:#4f4f4f;border:1.5px solid #151515"></div>
<div class="t" style="left:469px;top:194px;height:20px;line-height:20px;color:#e2e2e2">Draft</div>
<div class="t" style="left:552px;top:194px;height:20px;line-height:20px;color:#e2e2e2">1MR2J</div>
<div class="t" style="left:737px;top:194px;height:20px;line-height:20px;color:#e2e2e2;letter-spacing:0.12px">1M 0.063W 5% 0402 (1005 Metric)&nbsp; SMD</div>
<div class="t" style="left:1092px;top:194px;height:20px;line-height:20px;color:#e2e2e2">17/12/2018 21:39:26</div>
<div class="a" style="left:262px;top:213px;width:949px;height:20px;background:#3b3b3b"></div>
<svg style="left:315px;top:216px" width="15" height="15" viewBox="0 0 15 15"><path d="M0 2.5 H3 M0 5.5 H3 M0 8.5 H3 M0 11.5 H3 M11 2.5 H14 M11 5.5 H14 M11 8.5 H14 M11 11.5 H14" stroke="#dcdcdc" stroke-width="1"/><rect x="3.5" y="0.5" width="7" height="13" fill="#82a0ee" stroke="#5c7cd0" stroke-width="1"/><path d="M4.5 1.5 V12.5 M4.5 1.5 H9.5" stroke="#c8dcff" stroke-width="1"/></svg>
<div class="t" style="left:340px;top:214px;height:20px;line-height:20px;color:#e2e2e2">CMP-009-00151-2</div>
<div class="a" style="left:445px;top:217px;width:14px;height:14px;background:#4f4f4f;border:1.5px solid #151515"></div>
<div class="t" style="left:469px;top:214px;height:20px;line-height:20px;color:#e2e2e2">Draft</div>
<div class="t" style="left:552px;top:214px;height:20px;line-height:20px;color:#e2e2e2">Resistor 1M +/-5 % 0402 63 mW</div>
<div class="t" style="left:737px;top:214px;height:20px;line-height:20px;color:#e2e2e2;letter-spacing:0.12px">Chip Resistor, 1 MOhms, +/-5 %, 63 mW, -55 to 155 degC, 0402</div>
<div class="t" style="left:1092px;top:214px;height:20px;line-height:20px;color:#e2e2e2">06/05/2019 13:48:50</div>
<div class="a" style="left:262px;top:233px;width:949px;height:20px;background:#3b3b3b"></div>
<svg style="left:315px;top:236px" width="15" height="15" viewBox="0 0 15 15"><path d="M0 2.5 H3 M0 5.5 H3 M0 8.5 H3 M0 11.5 H3 M11 2.5 H14 M11 5.5 H14 M11 8.5 H14 M11 11.5 H14" stroke="#dcdcdc" stroke-width="1"/><rect x="3.5" y="0.5" width="7" height="13" fill="#82a0ee" stroke="#5c7cd0" stroke-width="1"/><path d="M4.5 1.5 V12.5 M4.5 1.5 H9.5" stroke="#c8dcff" stroke-width="1"/></svg>
<div class="t" style="left:340px;top:234px;height:20px;line-height:20px;color:#e2e2e2">CMP-009-00165-1</div>
<div class="a" style="left:445px;top:237px;width:14px;height:14px;background:#4f4f4f;border:1.5px solid #151515"></div>
<div class="t" style="left:469px;top:234px;height:20px;line-height:20px;color:#e2e2e2">Draft</div>
<div class="t" style="left:552px;top:234px;height:20px;line-height:20px;color:#e2e2e2">Resistor 1M +/-1 % 0402 63 mW</div>
<div class="t" style="left:737px;top:234px;height:20px;line-height:20px;color:#e2e2e2;letter-spacing:0.12px">Chip Resistor, 1 MOhms, +/-1 %, 63 mW, -55 to 155 degC, 0402</div>
<div class="t" style="left:1092px;top:234px;height:20px;line-height:20px;color:#e2e2e2">06/05/2019 13:17:13</div>
<div class="a" style="left:262px;top:253px;width:949px;height:20px;background:#3b3b3b"></div>
<svg style="left:315px;top:256px" width="15" height="15" viewBox="0 0 15 15"><path d="M0 2.5 H3 M0 5.5 H3 M0 8.5 H3 M0 11.5 H3 M11 2.5 H14 M11 5.5 H14 M11 8.5 H14 M11 11.5 H14" stroke="#dcdcdc" stroke-width="1"/><rect x="3.5" y="0.5" width="7" height="13" fill="#82a0ee" stroke="#5c7cd0" stroke-width="1"/><path d="M4.5 1.5 V12.5 M4.5 1.5 H9.5" stroke="#c8dcff" stroke-width="1"/></svg>
<div class="t" style="left:340px;top:254px;height:20px;line-height:20px;color:#e2e2e2">CMP-009-00165-2</div>
<div class="a" style="left:445px;top:257px;width:14px;height:14px;background:#4f4f4f;border:1.5px solid #151515"></div>
<div class="t" style="left:469px;top:254px;height:20px;line-height:20px;color:#e2e2e2">Draft</div>
<div class="t" style="left:552px;top:254px;height:20px;line-height:20px;color:#e2e2e2">Resistor 1M +/-1 % 0402 63 mW</div>
<div class="t" style="left:737px;top:254px;height:20px;line-height:20px;color:#e2e2e2;letter-spacing:0.12px">Chip Resistor, 1 MOhms, +/-1 %, 63 mW, -55 to 155 degC, 0402</div>
<div class="t" style="left:1092px;top:254px;height:20px;line-height:20px;color:#e2e2e2">06/05/2019 13:48:51</div>
<div class="a" style="left:262px;top:273px;width:949px;height:18px;background:#3e3e3e;border-bottom:1px solid #292929"></div>
<svg style="left:307px;top:279px" width="8" height="8" viewBox="0 0 8 8"><path d="M0 0 L6 3.2 L0 6.4 Z" fill="#8c8c8c"/></svg>
<div class="t" style="left:326px;top:274px;height:17px;line-height:17px;font-weight:bold;color:#f0f0f0">Value: 2.26M</div>
<div class="a" style="left:262px;top:291px;width:949px;height:18px;background:#3e3e3e;border-bottom:1px solid #292929"></div>
<svg style="left:307px;top:297px" width="8" height="8" viewBox="0 0 8 8"><path d="M0 0 L6 3.2 L0 6.4 Z" fill="#8c8c8c"/></svg>
<div class="t" style="left:326px;top:292px;height:17px;line-height:17px;font-weight:bold;color:#f0f0f0">Value: 2.49M</div>
<div class="a" style="left:262px;top:309px;width:949px;height:18px;background:#3d3d3d;border-bottom:1px solid #292929"></div>
<svg style="left:281px;top:315px" width="8" height="8" viewBox="0 0 8 8"><path d="M0 0 L6 3.2 L0 6.4 Z" fill="#8c8c8c"/></svg>
<div class="t" style="left:300px;top:310px;height:17px;line-height:17px;font-weight:bold;color:#f0f0f0">Case/Package: 0603</div>
<div class="a" style="left:262px;top:327px;width:949px;height:18px;background:#3d3d3d;border-bottom:1px solid #292929"></div>
<svg style="left:281px;top:333px" width="8" height="8" viewBox="0 0 8 8"><path d="M0 6.5 L6 6.5 L6 0.5 Z" fill="#8a8a8a"/></svg>
<div class="t" style="left:300px;top:328px;height:17px;line-height:17px;font-weight:bold;color:#f0f0f0">Case/Package: 0805</div>
<div class="a" style="left:262px;top:345px;width:949px;height:18px;background:#3e3e3e;border-bottom:1px solid #292929"></div>
<svg style="left:307px;top:351px" width="8" height="8" viewBox="0 0 8 8"><path d="M0 0 L6 3.2 L0 6.4 Z" fill="#8c8c8c"/></svg>
<div class="t" style="left:326px;top:346px;height:17px;line-height:17px;font-weight:bold;color:#f0f0f0">Value:</div>
<div class="a" style="left:262px;top:363px;width:949px;height:18px;background:#3e3e3e;border-bottom:1px solid #292929"></div>
<svg style="left:307px;top:369px" width="8" height="8" viewBox="0 0 8 8"><path d="M0 0 L6 3.2 L0 6.4 Z" fill="#8c8c8c"/></svg>
<div class="t" style="left:326px;top:364px;height:17px;line-height:17px;font-weight:bold;color:#f0f0f0">Value: 0</div>
<div class="a" style="left:262px;top:381px;width:949px;height:18px;background:#5f83a8;border-bottom:1px solid #292929"></div>
<div class="t" style="left:326px;top:382px;height:17px;line-height:17px;font-weight:bold;color:#f0f0f0">Value: 4.7</div>
<div class="a" style="left:262px;top:399px;width:949px;height:20px;background:#3b3b3b"></div>
<svg style="left:315px;top:402px" width="15" height="15" viewBox="0 0 15 15"><path d="M0 2.5 H3 M0 5.5 H3 M0 8.5 H3 M0 11.5 H3 M11 2.5 H14 M11 5.5 H14 M11 8.5 H14 M11 11.5 H14" stroke="#dcdcdc" stroke-width="1"/><rect x="3.5" y="0.5" width="7" height="13" fill="#82a0ee" stroke="#5c7cd0" stroke-width="1"/><path d="M4.5 1.5 V12.5 M4.5 1.5 H9.5" stroke="#c8dcff" stroke-width="1"/></svg>
<div class="t" style="left:340px;top:400px;height:20px;line-height:20px;color:#e2e2e2">CMP-009-00106-1</div>
<div class="a" style="left:445px;top:403px;width:14px;height:14px;background:#4f4f4f;border:1.5px solid #151515"></div>
<div class="t" style="left:469px;top:400px;height:20px;line-height:20px;color:#e2e2e2">Draft</div>
<div class="t" style="left:552px;top:400px;height:20px;line-height:20px;color:#e2e2e2">4D7R5J</div>
<div class="t" style="left:737px;top:400px;height:20px;line-height:20px;color:#e2e2e2;letter-spacing:0.12px">4R7 0.125W 5% 0805 (2012 Metric)&nbsp; SMD</div>
<div class="t" style="left:1092px;top:400px;height:20px;line-height:20px;color:#e2e2e2">17/12/2018 21:39:37</div>
<div class="a" style="left:262px;top:419px;width:949px;height:20px;background:#3b3b3b"></div>
<svg style="left:315px;top:422px" width="15" height="15" viewBox="0 0 15 15"><path d="M0 2.5 H3 M0 5.5 H3 M0 8.5 H3 M0 11.5 H3 M11 2.5 H14 M11 5.5 H14 M11 8.5 H14 M11 11.5 H14" stroke="#dcdcdc" stroke-width="1"/><rect x="3.5" y="0.5" width="7" height="13" fill="#82a0ee" stroke="#5c7cd0" stroke-width="1"/><path d="M4.5 1.5 V12.5 M4.5 1.5 H9.5" stroke="#c8dcff" stroke-width="1"/></svg>
<div class="t" style="left:340px;top:420px;height:20px;line-height:20px;color:#e2e2e2">CMP-009-00174-1</div>
<div class="a" style="left:445px;top:423px;width:14px;height:14px;background:#4f4f4f;border:1.5px solid #151515"></div>
<div class="t" style="left:469px;top:420px;height:20px;line-height:20px;color:#e2e2e2">Draft</div>
<div class="t" style="left:552px;top:420px;height:20px;line-height:20px;color:#e2e2e2">Resistor 4R7&nbsp; +/-5 % 0805 125...</div>
<div class="t" style="left:737px;top:420px;height:20px;line-height:20px;color:#e2e2e2;letter-spacing:0.12px">Chip Resistor, 4,7 Ohms, +/-5 %, 125 mW, -55 to 155 degC, 0805</div>
<div class="t" style="left:1092px;top:420px;height:20px;line-height:20px;color:#e2e2e2">06/05/2019 13:16:57</div>
<div class="a" style="left:262px;top:439px;width:949px;height:20px;background:#3b3b3b"></div>
<svg style="left:315px;top:442px" width="15" height="15" viewBox="0 0 15 15"><path d="M0 2.5 H3 M0 5.5 H3 M0 8.5 H3 M0 11.5 H3 M11 2.5 H14 M11 5.5 H14 M11 8.5 H14 M11 11.5 H14" stroke="#dcdcdc" stroke-width="1"/><rect x="3.5" y="0.5" width="7" height="13" fill="#82a0ee" stroke="#5c7cd0" stroke-width="1"/><path d="M4.5 1.5 V12.5 M4.5 1.5 H9.5" stroke="#c8dcff" stroke-width="1"/></svg>
<div class="t" style="left:340px;top:440px;height:20px;line-height:20px;color:#e2e2e2">CMP-009-00174-1</div>
<div class="a" style="left:445px;top:443px;width:14px;height:14px;background:#4f4f4f;border:1.5px solid #151515"></div>
<div class="t" style="left:469px;top:440px;height:20px;line-height:20px;color:#e2e2e2">Draft</div>
<div class="t" style="left:552px;top:440px;height:20px;line-height:20px;color:#e2e2e2">Resistor 4R7&nbsp; +/-5 % 0805 125...</div>
<div class="t" style="left:737px;top:440px;height:20px;line-height:20px;color:#e2e2e2;letter-spacing:0.12px">Chip Resistor, 4,7 Ohms, +/-5 %, 125 mW, -55 to 155 degC, 0805</div>
<div class="t" style="left:1092px;top:440px;height:20px;line-height:20px;color:#e2e2e2">06/05/2019 13:16:57</div>
<div class="a" style="left:262px;top:459px;width:949px;height:20px;background:#3b3b3b"></div>
<svg style="left:315px;top:462px" width="15" height="15" viewBox="0 0 15 15"><path d="M0 2.5 H3 M0 5.5 H3 M0 8.5 H3 M0 11.5 H3 M11 2.5 H14 M11 5.5 H14 M11 8.5 H14 M11 11.5 H14" stroke="#dcdcdc" stroke-width="1"/><rect x="3.5" y="0.5" width="7" height="13" fill="#82a0ee" stroke="#5c7cd0" stroke-width="1"/><path d="M4.5 1.5 V12.5 M4.5 1.5 H9.5" stroke="#c8dcff" stroke-width="1"/></svg>
<div class="t" style="left:340px;top:460px;height:20px;line-height:20px;color:#e2e2e2">CMP-009-00174-1</div>
<div class="a" style="left:445px;top:463px;width:14px;height:14px;background:#4f4f4f;border:1.5px solid #151515"></div>
<div class="t" style="left:469px;top:460px;height:20px;line-height:20px;color:#e2e2e2">Draft</div>
<div class="t" style="left:552px;top:460px;height:20px;line-height:20px;color:#e2e2e2">Resistor 4R7&nbsp; +/-5 % 0805 125...</div>
<div class="t" style="left:737px;top:460px;height:20px;line-height:20px;color:#e2e2e2;letter-spacing:0.12px">Chip Resistor, 4,7 Ohms, +/-5 %, 125 mW, -55 to 155 degC, 0805</div>
<div class="t" style="left:1092px;top:460px;height:20px;line-height:20px;color:#e2e2e2">06/05/2019 13:16:57</div>
<svg style="left:259px;top:62px;z-index:5" width="260" height="42" viewBox="259 62 260 42"><rect x="263" y="66.9" width="250.8" height="30.9" rx="8.6" ry="8.6" fill="none" stroke="#f77a14" stroke-width="4.4"/></svg>
<div class="a" style="left:1211px;top:118px;width:15px;height:361px;background:#3f3f3f"></div>
<svg style="left:1213px;top:122px" width="10" height="6" viewBox="0 0 10 6"><path d="M1 5 L5 1 L9 5 Z" fill="#7c7c7c"/></svg>
<div class="a" style="left:1215px;top:333px;width:7px;height:76px;background:#7a7a7a;border-radius:3px"></div>
<svg style="left:1213px;top:469px" width="10" height="6" viewBox="0 0 10 6"><path d="M1 1 L5 5 L9 1 Z" fill="#7c7c7c"/></svg>
<div class="a" style="left:261px;top:492px;width:965px;height:120px;background:#3b3b3b;border:1px solid #2a2a2a"></div>
<div class="a" style="left:262px;top:493px;width:963px;height:20px;background:#494949;border-top:1px solid #555;border-bottom:1px solid #2a2a2a"></div>
<div class="a" style="left:455px;top:497px;width:1px;height:13px;background:#222"></div>
<div class="a" style="left:647px;top:497px;width:1px;height:13px;background:#222"></div>
<div class="a" style="left:839px;top:497px;width:1px;height:13px;background:#222"></div>
<div class="a" style="left:1032px;top:497px;width:1px;height:13px;background:#222"></div>
<div class="t" style="left:269px;top:493px;height:20px;line-height:20px;color:#dedede">Item ID</div>
<div class="t" style="left:462px;top:493px;height:20px;line-height:20px;color:#dedede">Name</div>
<div class="t" style="left:654px;top:493px;height:20px;line-height:20px;color:#dedede">Revision Models</div>
<svg style="left:825px;top:501px" width="9" height="5" viewBox="0 0 9 5"><path d="M0.5 4.5 L4.5 0.5 L8.5 4.5 Z" fill="#1e1e1e"/></svg>
<div class="t" style="left:846px;top:493px;height:20px;line-height:20px;color:#dedede">Revision State</div>
<div class="t" style="left:1039px;top:493px;height:20px;line-height:20px;color:#dedede">Server</div>
<div class="t" style="left:284px;top:514px;height:20px;line-height:20px;color:#e2e2e2">CMPT-00009</div>
<div class="t" style="left:465px;top:514px;height:20px;line-height:20px;color:#e2e2e2">Resistors</div>
<div class="t" style="left:658px;top:514px;height:20px;line-height:20px;color:#e2e2e2">Component Template</div>
<div class="a" style="left:840px;top:517px;width:14px;height:14px;background:#585858;border:1.5px solid #151515"></div>
<div class="t" style="left:864px;top:514px;height:20px;line-height:20px;color:#e2e2e2">Draft</div>
<div class="t" style="left:1043px;top:514px;height:20px;line-height:20px;color:#e2e2e2">Company Workspace</div>
<div class="t" style="left:284px;top:534px;height:20px;line-height:20px;color:#e2e2e2">PCC-004-0006</div>
<div class="t" style="left:465px;top:534px;height:20px;line-height:20px;color:#e2e2e2">RESC0805(2012)_L</div>
<div class="t" style="left:658px;top:534px;height:20px;line-height:20px;color:#e2e2e2">Footprint</div>
<div class="a" style="left:840px;top:537px;width:14px;height:14px;background:#585858;border:1.5px solid #151515"></div>
<div class="t" style="left:864px;top:534px;height:20px;line-height:20px;color:#e2e2e2">Draft</div>
<div class="t" style="left:1043px;top:534px;height:20px;line-height:20px;color:#e2e2e2">Company Workspace</div>
<div class="t" style="left:284px;top:554px;height:20px;line-height:20px;color:#e2e2e2">SYM-004-0032</div>
<div class="t" style="left:465px;top:554px;height:20px;line-height:20px;color:#e2e2e2">4D7R5J</div>
<div class="t" style="left:658px;top:554px;height:20px;line-height:20px;color:#e2e2e2">Symbol</div>
<div class="a" style="left:840px;top:557px;width:14px;height:14px;background:#585858;border:1.5px solid #151515"></div>
<div class="t" style="left:864px;top:554px;height:20px;line-height:20px;color:#e2e2e2">Draft</div>
<div class="t" style="left:1043px;top:554px;height:20px;line-height:20px;color:#e2e2e2">Company Workspace</div>
<svg style="left:263px;top:515px" width="18" height="18" viewBox="0 0 18 18"><path d="M0.3 0.3 H8 L11 3.3 V12.5 H0.3 Z" fill="#f4f6f8"/><path d="M8 0.3 V3.3 H11" fill="#c8ccd0"/><path d="M5 9 H7 M5 11 H7 M5 13 H7 M15 9 H17 M15 11 H17 M15 13 H17" stroke="#e0e0e0" stroke-width="0.8"/><rect x="7" y="6.5" width="8" height="9.5" fill="#6f98ea" stroke="#a8c2f6" stroke-width="0.8"/></svg>
<svg style="left:263px;top:535px" width="18" height="16" viewBox="0 0 18 16"><path d="M1 9 L9 1.5 L15.5 6.5 L8 14 Z" fill="#8a8a8a" stroke="#5a5a5a" stroke-width="0.6"/><path d="M4 7.5 L10 3 M6 10 L12.5 5 M8 12.5 L14 8" stroke="#c8c8c8" stroke-width="1.1" stroke-dasharray="1.2 1"/></svg>
<svg style="left:263px;top:555px" width="18" height="16" viewBox="0 0 18 16"><path d="M0.5 4 H5 M0.5 11 H5 M12 7.5 H15" stroke="#e58a1a" stroke-width="2"/><path d="M4.5 2 H9 A5.5 5.5 0 0 1 9 13 H4.5 Z" fill="#f8cf4a" stroke="#e98a18" stroke-width="1.3"/></svg>
<div class="a" style="left:261px;top:622px;width:316px;height:187px;background:#3b3b3b;border:1px solid #2a2a2a"></div>
<div class="t" style="left:268px;top:624px;height:20px;line-height:20px;color:#e2e2e2;letter-spacing:0.25px">Case/Package</div>
<div class="t" style="left:421px;top:624px;height:20px;line-height:20px;color:#e2e2e2;letter-spacing:0.1px">0805</div>
<div class="t" style="left:268px;top:644px;height:20px;line-height:20px;color:#e2e2e2;letter-spacing:0.25px">Mounting Technology</div>
<div class="t" style="left:421px;top:644px;height:20px;line-height:20px;color:#e2e2e2;letter-spacing:0.1px">SMT</div>
<div class="t" style="left:268px;top:664px;height:20px;line-height:20px;color:#e2e2e2;letter-spacing:0.25px">Pins</div>
<div class="t" style="left:421px;top:664px;height:20px;line-height:20px;color:#e2e2e2;letter-spacing:0.1px">2</div>
<div class="t" style="left:268px;top:684px;height:20px;line-height:20px;color:#e2e2e2;letter-spacing:0.25px">Power</div>
<div class="t" style="left:421px;top:684px;height:20px;line-height:20px;color:#e2e2e2;letter-spacing:0.1px">125mW</div>
<div class="t" style="left:268px;top:704px;height:20px;line-height:20px;color:#e2e2e2;letter-spacing:0.25px">Tolerance</div>
<div class="t" style="left:421px;top:704px;height:20px;line-height:20px;color:#e2e2e2;letter-spacing:0.1px">5%</div>
<div class="t" style="left:268px;top:724px;height:20px;line-height:20px;color:#e2e2e2;letter-spacing:0.25px">Value</div>
<div class="t" style="left:421px;top:724px;height:20px;line-height:20px;color:#e2e2e2;letter-spacing:0.1px">4.7</div>
<div class="a" style="left:272px;top:808px;width:51px;height:19px;background:#4d4d4d;border:1px solid #262626;border-top:none;border-radius:0 0 4px 4px"></div>
<div class="t" style="left:278px;top:809px;height:18px;line-height:18px;color:#e6e6e6;letter-spacing:0.2px">Preview</div>
<div class="a" style="left:323px;top:808px;width:55px;height:19px;background:#3e3e3e;border:1px solid #262626;border-top:none;border-radius:0 0 4px 4px"></div>
<div class="t" style="left:329px;top:809px;height:18px;line-height:18px;color:#dcdcdc;letter-spacing:0.2px">Lifecycle</div>
<div class="a" style="left:378px;top:808px;width:76px;height:19px;background:#3e3e3e;border:1px solid #262626;border-top:none;border-radius:0 0 4px 4px"></div>
<div class="t" style="left:384px;top:809px;height:18px;line-height:18px;color:#dcdcdc;letter-spacing:0.2px">Part Choices</div>
<div class="a" style="left:454px;top:808px;width:76px;height:19px;background:#3e3e3e;border:1px solid #262626;border-top:none;border-radius:0 0 4px 4px"></div>
<div class="t" style="left:460px;top:809px;height:18px;line-height:18px;color:#dcdcdc;letter-spacing:0.2px">Where-used</div>
<div class="a" style="left:530px;top:808px;width:46px;height:19px;background:#3e3e3e;border:1px solid #262626;border-top:none;border-radius:0 0 4px 4px"></div>
<div class="t" style="left:536px;top:809px;height:18px;line-height:18px;color:#dcdcdc;letter-spacing:0.2px">Origin</div>
<div class="a" style="left:576px;top:808px;width:70px;height:19px;background:#3e3e3e;border:1px solid #262626;border-top:none;border-radius:0 0 4px 4px"></div>
<div class="t" style="left:582px;top:809px;height:18px;line-height:18px;color:#dcdcdc;letter-spacing:0.2px">Data Sheet</div>
<div class="a" style="left:587px;top:622px;width:314px;height:187px;background:linear-gradient(#fefefe,#dedede);border:1px solid #262626"></div>
<svg style="left:587px;top:622px" width="314" height="187" viewBox="587 622 314 187"><path d="M700 706 L704 703 L705 712 L717 721 L714 724 Z" fill="#d6b222"/><path d="M742 741 L786 726 L792 731.5 L762 756.5 L753 750 Z" fill="#d8b428"/><path d="M703.5 698 L704.5 711 L753.5 749 L753.5 735 Z" fill="#b8b5ae"/><path d="M753.5 735 L787.5 711 L786 726 L753.5 749 Z" fill="#d9dadc"/><path d="M703.5 698 L735.8 679.4 L787.5 711 L753.5 735 Z" fill="#e9e9e7"/><path d="M712.4 703.3 L744.2 684.6 L775.9 703.9 L744.2 727.8 Z" fill="#161616"/></svg>
<div class="a" style="left:596px;top:775px;width:25px;height:25px;background:#f1efef;border:1.5px solid #1a2a5c"></div>
<div class="t" style="left:601px;top:778px;height:20px;line-height:20px;color:#111;font-size:11px">2D</div>
<div class="a" style="left:912px;top:623px;width:314px;height:185px;background:#fff;border:1px solid #262626"></div>
<svg style="left:912px;top:623px" width="314" height="185" viewBox="912 623 314 185"><path d="M951.5 741 H997" stroke="#000" stroke-width="4.6" stroke-linecap="round"/><path d="M1139.5 741 H1185.5" stroke="#000" stroke-width="4.6" stroke-linecap="round"/><path d="M997 741 L1011.8 728.3 L1040.4 755 L1068 728.3 L1096 755 L1124.9 728.3 L1139.8 741" stroke="#0000f0" stroke-width="4.5" fill="none" stroke-linejoin="miter"/><path d="M956.1 701.9 H961.4 V731.8 H956.1 V710.2 C954 712 951.5 713.4 949.2 714.3 V709.3 C952.5 707.6 955 705 956.1 701.9 Z" fill="#000"/><text x="1175.5" y="731.8" font-family="Liberation Sans" font-size="40.3" fill="#000" stroke="#000" stroke-width="0.6">2</text><text x="993.5" y="713.8" font-family="Liberation Sans" font-size="40.3" fill="#000080" stroke="#000080" stroke-width="0.6" textLength="52" lengthAdjust="spacing">R?</text><text x="993.5" y="797.6" font-family="Liberation Sans" font-size="40.3" fill="#000080" stroke="#000080" stroke-width="0.6" textLength="154" lengthAdjust="spacing">Resistor</text></svg>
</body></html>
